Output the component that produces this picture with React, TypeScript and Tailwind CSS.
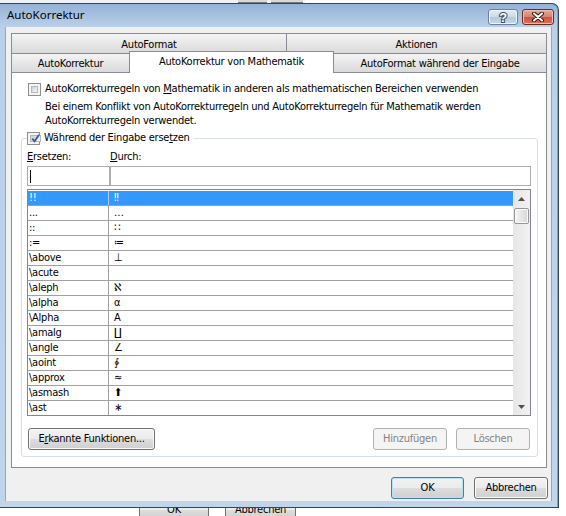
import React from "react";

const rows: [string, string][] = [
  ["!!", "‼"],
  ["...", "…"],
  ["::", "∷"],
  [":=", "≔"],
  ["\\above", "⊥"],
  ["\\acute", ""],
  ["\\aleph", "ℵ"],
  ["\\alpha", "α"],
  ["\\Alpha", "Α"],
  ["\\amalg", "∐"],
  ["\\angle", "∠"],
  ["\\aoint", "∳"],
  ["\\approx", "≈"],
  ["\\asmash", "⬆"],
  ["\\ast", "∗"],
];

function CheckBox({ checked }: { checked?: boolean }) {
  return (
    <span className="flex h-[13px] w-[13px] shrink-0 border border-[#8e8f8f] bg-[#f4f4f4] p-[2px]">
      <span className="flex flex-1 items-center justify-center border border-[#b4b8bd] bg-gradient-to-br from-[#cdd1d6] to-[#f7f7f7]">
        {checked && (
          <svg width="9" height="9" viewBox="0 0 9 9" className="overflow-visible">
            <path d="M1.2 4.6 L3.6 7.2 L8 0.8" fill="none" stroke="#3d58a6" strokeWidth="1.8" />
          </svg>
        )}
      </span>
    </span>
  );
}

function Button({
  children,
  className = "",
  disabled,
  primary,
}: {
  children: React.ReactNode;
  className?: string;
  disabled?: boolean;
  primary?: boolean;
}) {
  if (disabled) {
    return (
      <div className={`flex h-[22px] items-center justify-center rounded-[3px] border border-[#adb2b5] bg-[#f4f4f4] text-[#838383] ${className}`}>
        {children}
      </div>
    );
  }
  return (
    <div
      className={`flex h-[22px] items-center justify-center rounded-[3px] border bg-[linear-gradient(#f2f2f2,#ebebeb_50%,#dddddd_50%,#cfcfcf)] ${
        primary ? "border-[#3c7fb1] shadow-[inset_0_0_0_1px_#b9e0f7]" : "border-[#707070] shadow-[inset_0_0_0_1px_#fbfbfb]"
      } ${className}`}
    >
      {children}
    </div>
  );
}

function Tab({ children, className = "" }: { children: React.ReactNode; className?: string }) {
  return (
    <div className={`flex items-center justify-center border border-b-0 border-[#898c95] bg-gradient-to-b from-[#f4f4f4] to-[#dadada] ${className}`}>
      {children}
    </div>
  );
}

function ListBox() {
  return (
    <div className="flex h-[227px] border border-[#828790] bg-white">
      <div className="flex flex-1 flex-col pt-px">
        {rows.map(([a, b], i) => (
          <div
            key={a}
            className={`flex shrink-0 ${i === rows.length - 1 ? "h-[14px]" : "h-[15px] border-b border-[#a0a0a0]"} ${
              i === 0 ? "bg-[#3399ff] text-white" : ""
            }`}
          >
            <div className={`flex w-[81px] items-center border-r pl-px ${i === 0 ? "border-[#a8cdf5]" : "border-[#a0a0a0]"}`}>{a}</div>
            <div className="flex flex-1 items-center pl-[5px]">{b}</div>
          </div>
        ))}
      </div>
      <div className="flex w-[17px] flex-col items-center bg-gradient-to-r from-[#e6e6e6] to-[#f2f2f2]">
        <div className="flex h-[17px] w-full items-center justify-center">
          <svg width="7" height="4" viewBox="0 0 7 4">
            <path d="M0 4 L3.5 0 L7 4 Z" fill="#505050" />
          </svg>
        </div>
        <div className="mt-px h-[16px] w-[15px] rounded-[2px] border border-[#979797] bg-gradient-to-r from-[#f6f6f6] to-[#d5d5d5] shadow-[inset_0_0_0_1px_#fafafa]" />
        <div className="flex-1" />
        <div className="flex h-[17px] w-full items-center justify-center">
          <svg width="7" height="4" viewBox="0 0 7 4">
            <path d="M0 0 L7 0 L3.5 4 Z" fill="#505050" />
          </svg>
        </div>
      </div>
    </div>
  );
}

export default function App() {
  return (
    <div className="flex h-[516px] w-[566px] flex-col overflow-hidden bg-white text-[11px] tracking-[-0.25px] text-black font-['DejaVu_Sans_Condensed','Liberation_Sans',sans-serif]">
      {/* window behind, top */}
      <div className="flex h-[3px] shrink-0">
        <div className="flex w-[305px] bg-[#eef2f6]">
          <div className="ml-[238px] w-[29px] border-b border-[#7a7a7a] bg-[#d8d8d8]" />
          <div className="ml-[4px] w-[32px] border-b border-[#7a7a7a] bg-[#d8d8d8]" />
        </div>
      </div>

      {/* dialog */}
      <div className="flex h-[505px] w-[559px] shrink-0 flex-col rounded-tr-[7px] border border-l-0 border-[#34465d] bg-[linear-gradient(#93b2d6,#bad0e9_23px,#c0d4ea)] shadow-[inset_-1px_0_#4fb6ec]">
        <div className="flex h-[23px] shrink-0 items-start">
          <span className="ml-[7px] mt-[3px] text-[11.5px] leading-[16px] tracking-normal font-['Segoe_UI','Noto_Sans',sans-serif]">AutoKorrektur</span>
          <div className="ml-auto mr-[4px] mt-[5px] flex gap-[4px]">
            <div className="flex h-[16px] w-[30px] items-center justify-center rounded-[3px] border border-[#6b819e] bg-[linear-gradient(#e2ebf5,#cbdbec_50%,#b3c9e2_50%,#c5d8ec)] shadow-[inset_0_0_0_1px_#eef4fa]">
              <svg width="12" height="14" viewBox="0 0 12 14">
                <text
                  x="6"
                  y="12"
                  textAnchor="middle"
                  fontSize="13"
                  fontWeight="bold"
                  fontFamily="Liberation Sans, sans-serif"
                  fill="#ffffff"
                  stroke="#3a4a60"
                  strokeWidth="2"
                  paintOrder="stroke"
                >
                  ?
                </text>
              </svg>
            </div>
            <div className="flex h-[16px] w-[32px] items-center justify-center rounded-[3px] border border-[#6e2a21] bg-[linear-gradient(#e9a99a,#d8826f_50%,#c75541_50%,#d8745f)] shadow-[inset_0_0_0_1px_#f0c0b4]">
              <svg width="14" height="10" viewBox="0 0 14 10">
                <path d="M3 1.5 L11 8.5 M11 1.5 L3 8.5" stroke="#3b1a14" strokeWidth="4" strokeLinecap="round" />
                <path d="M3 1.5 L11 8.5 M11 1.5 L3 8.5" stroke="#ffffff" strokeWidth="2" strokeLinecap="round" />
              </svg>
            </div>
          </div>
        </div>

        <div className="flex h-[474px] shrink-0">
          <div className="w-[6px] shrink-0 border-r border-[#8fa8c6]" />
          <div className="flex w-[545px] shrink-0 flex-col bg-[#f0f0f0] pl-[5px] pr-[4px] pt-[6px]">
            {/* tabs */}
            <div className="flex h-[20px]">
              <Tab className="w-[276px] pt-[3px]">AutoFormat</Tab>
              <Tab className="-ml-px flex-1 pt-[3px]">Aktionen</Tab>
            </div>
            <div className="flex h-[19px] items-end">
              <Tab className="h-[19px] w-[119px] pt-[2px]">AutoKorrektur</Tab>
              <div className="relative z-10 -mb-px -ml-px flex h-[22px] w-[205px] items-center justify-center border border-b-0 border-[#898c95] bg-white">
                AutoKorrektur von Mathematik
              </div>
              <Tab className="-ml-px h-[19px] flex-1 pt-[2px]">AutoFormat während der Eingabe</Tab>
            </div>

            {/* panel */}
            <div className="flex h-[396px] flex-col border border-[#898c95] bg-white">
              <div className="ml-[16px] mt-[9px] flex h-[14px] items-center gap-[4px]">
                <CheckBox />
                <span>
                  AutoKorrekturregeln von <span className="underline">M</span>athematik in anderen als mathematischen Bereichen verwenden
                </span>
              </div>
              <p className="ml-[33px] mt-[4px] leading-[14px]">
                Bei einem Konflikt von AutoKorrekturregeln und AutoKorrekturregeln für Mathematik werden
                <br />
                AutoKorrekturregeln verwendet.
              </p>

              <fieldset className="ml-[9px] mr-[8px] mt-[3px] rounded-[3px] border border-[#d5dfe5] pb-[6px] pl-[5px] pr-[6px]">
                <legend className="flex h-[14px] items-center gap-[4px] pr-[4px]">
                  <CheckBox checked />
                  <span>
                    Während der Eingabe erse<span className="underline">t</span>zen
                  </span>
                </legend>
                <div className="mt-[5px] flex h-[14px] items-center">
                  <span className="w-[83px]">
                    <span className="underline">E</span>rsetzen:
                  </span>
                  <span>
                    <span className="underline">D</span>urch:
                  </span>
                </div>
                <div className="mt-[2px] flex h-[20px]">
                  <div className="flex w-[83px] items-center border border-[#abadb3] bg-white">
                    <span className="ml-[2px] h-[13px] w-px bg-black" />
                  </div>
                  <div className="flex-1 border border-[#abadb3] bg-white" />
                </div>
                <div className="mt-[3px]">
                  <ListBox />
                </div>
                <div className="mt-[12px] flex">
                  <Button className="ml-px w-[127px]">
                    E<span className="underline">r</span>kannte Funktionen...
                  </Button>
                  <Button disabled className="ml-auto w-[74px]">
                    Hinzufügen
                  </Button>
                  <Button disabled className="ml-[9px] mr-px w-[74px]">
                    Löschen
                  </Button>
                </div>
              </fieldset>
            </div>

            <div className="mt-[9px] flex justify-end gap-[10px]">
              <Button primary className="w-[73px]">
                OK
              </Button>
              <Button className="-mr-px w-[74px]">Abbrechen</Button>
            </div>
          </div>
          <div className="flex-1 border-l border-[#8fa8c6]" />
        </div>
        <div className="flex-1" />
      </div>

      {/* window behind, bottom */}
      <div className="flex h-[8px] shrink-0 overflow-hidden">
        <div className="ml-[139px] -mt-[9px] flex h-[22px] w-[70px] shrink-0 items-center justify-center border border-[#707070] bg-[linear-gradient(#f2f2f2,#ebebeb_50%,#dddddd_50%,#cfcfcf)]">
          OK
        </div>
        <div className="ml-[16px] -mt-[9px] flex h-[22px] w-[71px] shrink-0 items-center justify-center border border-[#707070] bg-[linear-gradient(#f2f2f2,#ebebeb_50%,#dddddd_50%,#cfcfcf)]">
          Abbrechen
        </div>
      </div>
    </div>
  );
}
